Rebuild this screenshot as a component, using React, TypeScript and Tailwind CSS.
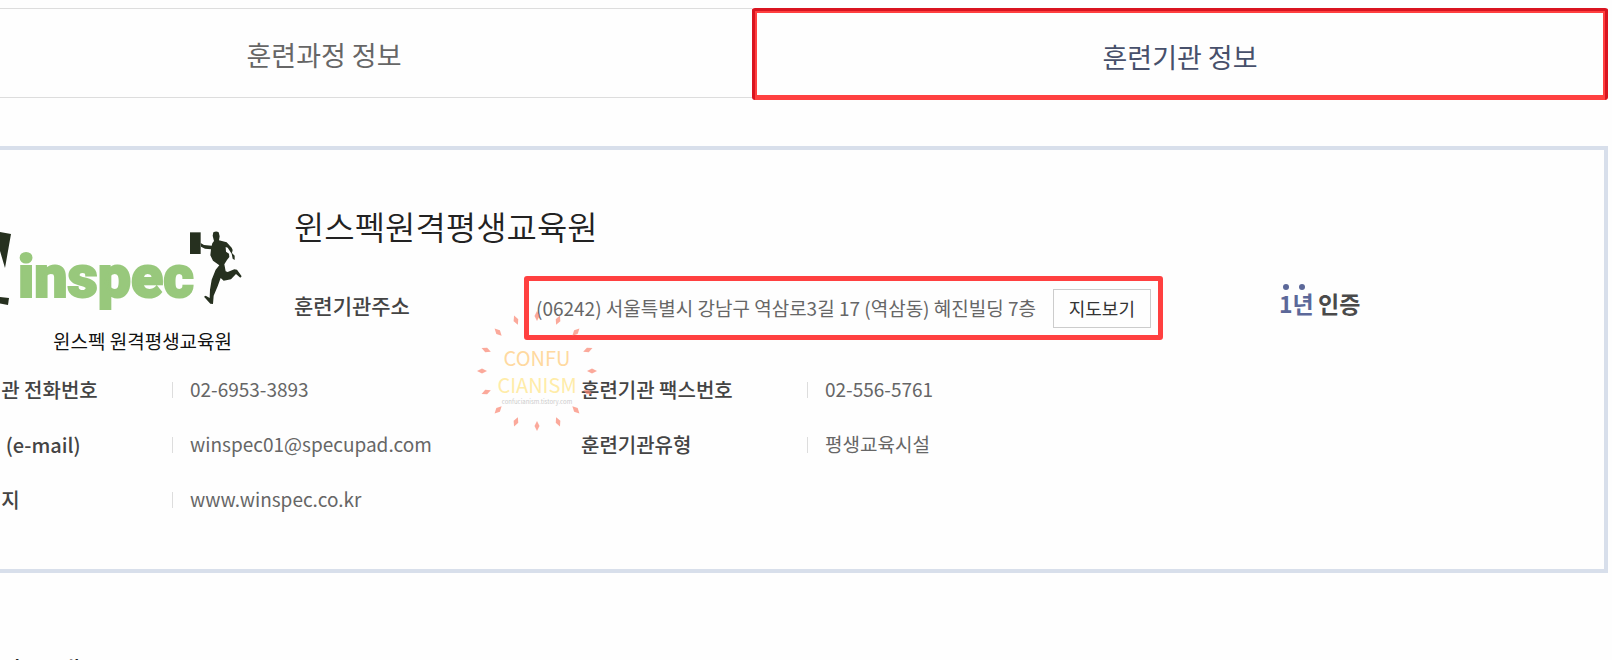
import React from 'react';

type InfoItem = { label: string; value: string; href?: string };

const infoRows: InfoItem[][] = [
  [
    { label: '훈련기관 전화번호', value: '02-6953-3893' },
    { label: '훈련기관 팩스번호', value: '02-556-5761' },
  ],
  [
    { label: '이메일 (e-mail)', value: 'winspec01@specupad.com' },
    { label: '훈련기관유형', value: '평생교육시설' },
  ],
  [{ label: '홈페이지', value: 'www.winspec.co.kr', href: '#homepage' }],
];

const App: React.FC = () => (
  <div className="h-screen overflow-hidden bg-[#fefefe] font-['Noto_Sans_CJK_KR',sans-serif] text-[#666]">
    <div className="-ml-[104px] mr-1 pt-2">
      <Tabs />
      <main>
        <InstitutionPanel />
        <h2 className="mt-[78px] pl-6 text-[28px] leading-10 text-[#222]">훈련기관 소개</h2>
      </main>
    </div>
  </div>
);

const Tabs: React.FC = () => (
  <div role="tablist" className="grid h-[92px] grid-cols-2 text-[27px]">
    <button role="tab" aria-selected="false" className="mb-[2px] border-y border-[#ddd] pt-1">
      훈련과정 정보
    </button>
    {/* Selected tab: dark frame with a brighter line inside */}
    <button role="tab" aria-selected="true" className="flex rounded-[3px] border-x-3 border-t-3 border-[#d91420] text-[#47506b]">
      <span className="flex h-full w-full items-center justify-center border-2 border-b-5 border-[#ff4040] pt-1.5">
        훈련기관 정보
      </span>
    </button>
  </div>
);

const InstitutionPanel: React.FC = () => (
  <section className="relative mt-[46px] flex border-4 border-[#d8dfeb] pt-12 pb-[42px] pl-[46px]">
    <div className="min-w-0 flex-1">
      <div className="flex gap-12">
        <WinspecLogo />
        <div className="min-w-0 flex-1">
          <h1 className="text-[33px] leading-[56px] font-[350] text-[#222]">윈스펙원격평생교육원</h1>
          <dl className="mt-[22px] flex items-center">
            <dt className="w-[230px] shrink-0 pb-1 text-[21px] font-medium text-[#444]">훈련기관주소</dt>
            <dd className="flex h-16 w-[639px] shrink-0 items-center justify-between rounded-[3px] border-5 border-[#ff4040] px-[7px] text-[19px] whitespace-nowrap">
              (06242) 서울특별시 강남구 역삼로3길 17 (역삼동) 혜진빌딩 7층
              <button className="h-[39px] border border-[#ccc] px-[15px] text-[18px] leading-none text-[#333]">지도보기</button>
            </dd>
          </dl>
        </div>
      </div>

      {infoRows.map((row) => (
        <dl key={row[0].label} className="grid h-[55px] grid-cols-2 items-center">
          {row.map((item) => (
            <InfoCell key={item.label} {...item} />
          ))}
        </dl>
      ))}
    </div>

    <aside className="w-[388px] shrink-0 pt-[82px] pl-[62px]">
      <CertMark />
    </aside>

    <Watermark />
  </section>
);

const InfoCell: React.FC<InfoItem> = ({ label, value, href }) => (
  <div className="flex items-center">
    <dt className="w-[226px] shrink-0 text-[20px] font-medium text-[#444]">{label}</dt>
    <dd className="flex items-center gap-[17px] text-[19px]">
      <span className="h-4 w-px bg-[#ddd]" />
      {href ? <a href={href}>{value}</a> : value}
    </dd>
  </div>
);

const WinspecLogo: React.FC = () => (
  <svg width="300" height="164" viewBox="0 0 300 164" role="img" aria-label="winspec" className="shrink-0">
    {/* Right stroke of the mark and its foot */}
    <path d="M48 33l17 3-6 34-5-17-5-18Z" fill="#26301f" />
    <path d="M46 98l17 2-1 7-16-3Z" fill="#26301f" />
    <text x="72" y="99" fontSize="59" fontWeight="900" fill="#98c87c" stroke="#98c87c" strokeWidth="2" className="font-[Roboto,sans-serif]">
      inspec
    </text>
    {/* Running man with a case */}
    <g fill="#26301f" transform="translate(239 27) scale(0.3333)">
      <path d="M15 22h32v65H15Z" />
      <path d="M47 54l10 6 23 2 2-7 5-7-4-16 2-10q9-5 16 0l3 12-2 12 23 6 15 16 3 7-2 9 8 8v13l-6-4-3-15-12-18-6-2 1 14 9 6 1 10-7 9-8 13 4 21 6 2 20-8 8 1 14 20-4 4-13-11-15 16-22 4-9-8-9 25-12 28-2 25-8-1-19-21 5-3 12 7 1-25 5-30 12-30 11-13-19-14-8-16 2-18-18-2-12-6Z" />
    </g>
    <text x="107" y="151" fontSize="19" fill="#111">윈스펙 원격평생교육원</text>
  </svg>
);

const CertMark: React.FC = () => (
  <svg width="88" height="40" viewBox="0 0 88 40" role="img" aria-label="1년 인증" className="text-[23px] font-bold">
    <circle cx="8" cy="7" r="3" fill="#5c6899" />
    <circle cx="24" cy="7" r="3" fill="#5c6899" />
    <text x="1" y="33" fill="#5c6899">1년</text>
    <text x="40" y="33" fill="#4a4a4a">인증</text>
  </svg>
);

const Watermark: React.FC = () => (
  <svg width="120" height="120" viewBox="-60 -60 120 120" textAnchor="middle" className="pointer-events-none absolute top-[161px] left-[577px]">
    {Array.from({ length: 16 }, (_, i) => (
      <path key={i} d="M50 0l5-2.5 5 2.5-5 2.5Z" fill="#f98570" fillOpacity="0.7" transform={`rotate(${i * 22.5})`} />
    ))}
    <text x="0" y="-5" fontSize="20" fill="#ffd9a0">CONFU</text>
    <text x="0" y="22" fontSize="20" fill="#ffeca8">CIANISM</text>
    <text x="0" y="33" fontSize="6" fill="#ccc">confucianism.tistory.com</text>
  </svg>
);

export default App;
